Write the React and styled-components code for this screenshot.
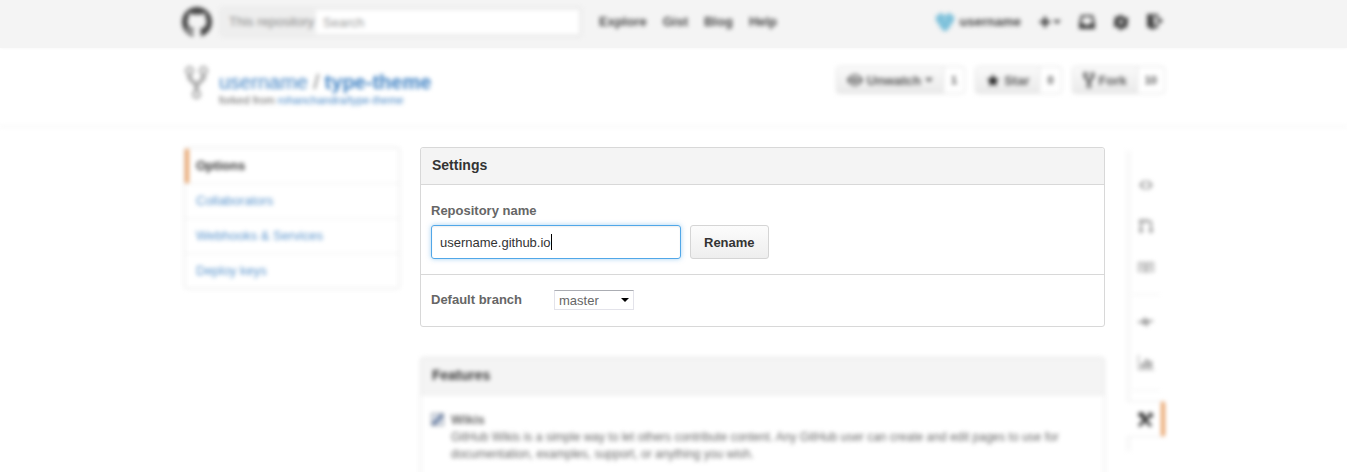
import React from "react";
import styled, { createGlobalStyle, css } from "styled-components";

const GlobalStyle = createGlobalStyle`
  * { box-sizing: border-box; }
  body {
    margin: 0;
    background: #fff;
    color: #333;
    font: 13px/18px "Liberation Sans", Arial, sans-serif;
  }
  a { color: #4183c4; text-decoration: none; }
  button, input, select { font-family: inherit; }
  h1, h2, p, ul, dl { margin: 0; padding: 0; }
`;

/* Everything that is not the active panel is out of focus. */
const soft = css`
  filter: blur(2px);
`;

const Page = styled.div`
  height: 100vh;
  overflow: hidden;
`;

const Container = styled.div`
  width: 100%;
  max-width: 983px;
  margin: 0 auto;
  display: flex;
`;

const TopBar = styled.header`
  background: #f4f4f4;
  box-shadow: 0 0 3px #f4f4f4;
`;

const TopBarRow = styled(Container)`
  ${soft}
  height: 48px;
  padding-bottom: 4px;
  align-items: center;
`;

const Icon = styled.svg`
  display: block;
  flex: none;
  fill: currentColor;
`;

const SearchForm = styled.form`
  display: flex;
  width: 362px;
  height: 30px;
  margin-left: 8px;
  padding: 2px;
  border: 1px solid #e6e6e6;
  border-radius: 3px;
  background: #eee;
`;

const SearchScope = styled.label`
  width: 93px;
  padding-left: 6px;
  color: #888;
  line-height: 24px;
  white-space: nowrap;
`;

const SearchInput = styled.input`
  flex: 1;
  min-width: 0;
  padding: 0 7px;
  border: 0;
  background: #fff;
  font-size: 13px;
  &::placeholder { color: #999; }
`;

const TopNav = styled.nav`
  display: flex;
  gap: 16px;
  margin-left: 17px;
`;

const TopLink = styled.a`
  color: #444;
  font-weight: bold;
`;

const UserTools = styled.div`
  display: flex;
  align-items: center;
  margin-left: auto;
  padding-right: 2px;
  gap: 18px;
  color: #333;
`;

const UserLink = styled(TopLink)`
  display: flex;
  align-items: center;
  gap: 6px;
`;

const ToolButton = styled.button`
  display: flex;
  align-items: center;
  gap: 2px;
  padding: 0;
  border: 0;
  background: none;
  color: #444;
`;

const Caret = styled.span`
  border: 4px solid transparent;
  border-top-color: currentColor;
  border-bottom: 0;
`;

const RepoHead = styled.div`
  ${soft}
  border-bottom: 1px solid #eee;
`;

const RepoHeadRow = styled(Container)`
  height: 78px;
  padding: 18px 0 0 3px;
  align-items: flex-start;
`;

const RepoTitle = styled.div`
  flex: 1;
  margin-left: 11px;
  padding-top: 4px;
`;

const RepoName = styled.h1`
  font-size: 20px;
  line-height: 24px;
  font-weight: normal;
  color: #777;
`;

const ForkedFrom = styled.p`
  font-size: 11px;
  line-height: 12px;
  color: #666;
`;

const RepoActions = styled.div`
  display: flex;
  gap: 10px;
`;

const ActionGroup = styled.div`
  display: flex;
  height: 28px;
  border: 1px solid #e2e2e2;
  border-radius: 3px;
`;

const ActionButton = styled.button`
  display: flex;
  align-items: center;
  gap: 4px;
  padding: 0 10px;
  border: 0;
  border-right: 1px solid #e2e2e2;
  background: linear-gradient(#fafafa, #eaeaea);
  color: #555;
  font-size: 13px;
  font-weight: bold;
`;

const ActionCount = styled.a`
  padding: 0 7px;
  color: #555;
  font-size: 11px;
  font-weight: bold;
  line-height: 26px;
`;

const Columns = styled(Container)`
  padding: 20px 0 0 2px;
  align-items: flex-start;
`;

const Menu = styled.nav`
  ${soft}
  width: 216px;
  border: 1px solid #e2e2e2;
  border-radius: 3px;
`;

const MenuItem = styled.a`
  display: block;
  height: 35px;
  padding-left: 11px;
  border-top: 1px solid ${(p) => (p.$active ? "transparent" : "#eee")};
  box-shadow: ${(p) => (p.$active ? "inset 4px 0 #e9a36a" : "none")};
  color: ${(p) => (p.$active ? "#333" : "#5a94cc")};
  font-weight: ${(p) => (p.$active ? "bold" : "normal")};
  line-height: 34px;
`;

const Main = styled.main`
  flex: 1;
  min-width: 0;
  margin: 0 22px 0 20px;
`;

const Panel = styled.section`
  margin-bottom: 30px;
  border: 1px solid ${(p) => (p.$soft ? "#e2e2e2" : "#d8d8d8")};
  border-radius: 3px;
  ${(p) => p.$soft && soft}
`;

const PanelTitle = styled.h2`
  padding: 0 11px 2px;
  border-bottom: 1px solid ${(p) => (p.$soft ? "#e6e6e6" : "#d8d8d8")};
  border-radius: 3px 3px 0 0;
  background: #f4f4f4;
  color: #333;
  font-size: 14px;
  line-height: 34px;
`;

const NameForm = styled.form`
  padding: 17px 10px 15px;
  border-bottom: 1px solid #d8d8d8;
`;

const FieldLabel = styled.label`
  display: block;
  color: #666;
  font-weight: bold;
`;

const FieldRow = styled.div`
  display: flex;
  gap: 9px;
  margin-top: 5px;
`;

const TextField = styled.div`
  display: flex;
  align-items: center;
  width: 250px;
  height: 34px;
  padding: 0 8px;
  border: 1px solid #51a7e8;
  border-radius: 3px;
  box-shadow: inset 0 1px 2px rgba(0, 0, 0, 0.07), 0 0 5px rgba(81, 167, 232, 0.5);
`;

const NameInput = styled.input`
  field-sizing: content;
  max-width: 100%;
  padding: 0;
  border: 0;
  outline: 0;
  background: none;
  color: #333;
  font-size: 13px;
`;

const TextCursor = styled.span`
  width: 1px;
  height: 16px;
  background: #000;
`;

const RenameButton = styled.button`
  height: 34px;
  padding: 0 13px;
  border: 1px solid #d5d5d5;
  border-radius: 3px;
  background: linear-gradient(#fcfcfc, #eee);
  color: #333;
  font-size: 13px;
  font-weight: bold;
`;

const BranchRow = styled.div`
  display: flex;
  align-items: center;
  gap: 32px;
  padding: 15px 10px 16px;
`;

const SelectWrap = styled.div`
  display: grid;
  align-items: center;
  width: 80px;
  height: 20px;
  border: 1px solid #e3e3ea;
  border-top-color: #abadb3;
  background: #fff;
  > * { grid-area: 1 / 1; }
`;

const Select = styled.select`
  appearance: none;
  width: 100%;
  padding: 0 4px;
  border: 0;
  background: none;
  color: #666;
  font-size: 13px;
`;

const SelectArrow = styled(Caret)`
  justify-self: end;
  margin-right: 4px;
  color: #000;
  pointer-events: none;
`;

const Feature = styled.div`
  display: flex;
  align-items: flex-start;
  gap: 7px;
  padding: 16px 11px 40px 10px;
  color: #666;
`;

const Checkbox = styled.input`
  flex: none;
  width: 13px;
  height: 13px;
  margin: 2px 0 0;
  appearance: none;
  border: 1px solid #9aa1ac;
  background: linear-gradient(135deg, #dde3ec 35%, #6f83a6 45%, #6f83a6 60%, #dde3ec 70%);
`;

const FeatureText = styled.p`
  font-size: 12px;
  line-height: 17px;
`;

const SideNav = styled.nav`
  ${soft}
  display: flex;
  flex-direction: column;
  width: 38px;
  height: 300px;
  margin-top: 4px;
  padding-top: 13px;
  box-shadow: inset 3px 0 #f4f4f4;
`;

const SideLink = styled.a`
  display: flex;
  align-items: center;
  justify-content: center;
  height: 41px;
  color: #999;
`;

const SideRule = styled.span`
  height: 1px;
  margin: 7px 6px 6px;
  background: #eee;
`;

const SideActive = styled(SideLink)`
  height: 36px;
  margin-top: 4px;
  padding-left: 2px;
  border: 1px solid #eee;
  border-left: 0;
  border-right: 4px solid #e9a36a;
  border-radius: 0 3px 3px 0;
  background: #fff;
  color: #333;
`;

function MarkIcon() {
  return (
    <Icon width="30" height="30" viewBox="0 0 16 16" aria-hidden="true">
      <path d="M8 0C3.58 0 0 3.58 0 8c0 3.54 2.29 6.53 5.47 7.59.4.07.55-.17.55-.38 0-.19-.01-.82-.01-1.49-2.01.37-2.53-.49-2.69-.94-.09-.23-.48-.94-.82-1.13-.28-.15-.68-.52-.01-.53.63-.01 1.08.58 1.23.82.72 1.21 1.87.87 2.33.66.07-.52.28-.87.51-1.07-1.78-.2-3.64-.89-3.64-3.95 0-.87.31-1.59.82-2.15-.08-.2-.36-1.02.08-2.12 0 0 .67-.21 2.2.82.64-.18 1.32-.27 2-.27.68 0 1.36.09 2 .27 1.53-1.04 2.2-.82 2.2-.82.44 1.1.16 1.92.08 2.12.51.56.82 1.27.82 2.15 0 3.07-1.87 3.75-3.65 3.95.29.25.54.73.54 1.48 0 1.07-.01 1.93-.01 2.2 0 .21.15.46.55.38A8.013 8.013 0 0 0 16 8c0-4.42-3.58-8-8-8z" />
    </Icon>
  );
}

const ForkSvg = styled(Icon)`
  color: ${(p) => p.$color};
`;

function ForkIcon({ width, height, color }) {
  return (
    <ForkSvg $color={color} width={width} height={height} viewBox="0 0 10 14" preserveAspectRatio="none" aria-hidden="true">
      <path
        fillRule="evenodd"
        d="M8 0a2 2 0 0 0-1 3.72V5L5 7 3 5V3.72A2 2 0 1 0 1 3.72V5.5l3 3v1.78a2 2 0 1 0 2 0V8.5l3-3V3.72A2 2 0 0 0 8 0zM2 3A1 1 0 1 1 2 1a1 1 0 0 1 0 2zm3 10a1 1 0 1 1 0-2 1 1 0 0 1 0 2zm3-10A1 1 0 1 1 8 1a1 1 0 0 1 0 2z"
      />
    </ForkSvg>
  );
}

const Avatar = styled(Icon)`
  color: #7cc0da;
`;

function Glyph({ children, size = 16 }) {
  return (
    <Icon width={size} height={size} viewBox="0 0 16 16" aria-hidden="true">
      {children}
    </Icon>
  );
}

export default function App() {
  return (
    <Page>
      <GlobalStyle />
      <TopBar>
        <TopBarRow>
          <TopLink href="#" aria-label="Home"><MarkIcon /></TopLink>
          <SearchForm>
            <SearchScope htmlFor="search">This repository</SearchScope>
            <SearchInput id="search" placeholder="Search" />
          </SearchForm>
          <TopNav>
            <TopLink href="#">Explore</TopLink>
            <TopLink href="#">Gist</TopLink>
            <TopLink href="#">Blog</TopLink>
            <TopLink href="#">Help</TopLink>
          </TopNav>
          <UserTools>
            <UserLink href="#">
              <Avatar width="18" height="18" viewBox="0 0 16 16" aria-hidden="true">
                <path d="M3 0h3v2h4V0h3v2h3v6h-2v3h-2v3h-2v2H6v-2H4v-3H2V8H0V2h3z" />
                <path d="M7 5h2v2H7z" fill="#b9dfec" />
              </Avatar>
              username
            </UserLink>
            <ToolButton aria-label="Create new">
              <Glyph size={12}><path d="M6 1h4v5h5v4h-5v5H6v-5H1V6h5z" /></Glyph>
              <Caret />
            </ToolButton>
            <ToolButton aria-label="Inbox">
              <Glyph>
                <path fillRule="evenodd" d="M2 1h12l2 8v6H0V9zM4 3 2 9h3l1 2h4l1-2h3l-2-6z" />
              </Glyph>
            </ToolButton>
            <ToolButton aria-label="Account settings">
              <Glyph>
                <path fillRule="evenodd" d="M6.500 1h3l.5 2 1.500.7 2-1 2 2-1 2 .5 1v2l-1 .8.5 2-2 2-2-.8-1 .6-.5 1.700h-3L5.500 13.300 4 13l-2 .5-1.500-2 1-2L1 8.500v-2l1-1-.5-2 2-1.500 2 1zM8 6a2 2 0 1 0 0 4 2 2 0 0 0 0-4z" />
              </Glyph>
            </ToolButton>
            <ToolButton aria-label="Sign out">
              <Glyph>
                <path d="M0 0h11v5H9V2H5l2 2v8h2V9h2v5H7v2L0 13zM10 6h2V3l4 4-4 3V8h-2z" />
              </Glyph>
            </ToolButton>
          </UserTools>
        </TopBarRow>
      </TopBar>

      <RepoHead>
        <RepoHeadRow>
          <ForkIcon width={23} height={33} color="#aaa" />
          <RepoTitle>
            <RepoName>
              <a href="#">username</a> / <a href="#"><strong>type-theme</strong></a>
            </RepoName>
            <ForkedFrom>forked from <a href="#">rohanchandra/type-theme</a></ForkedFrom>
          </RepoTitle>
          <RepoActions>
            <ActionGroup>
              <ActionButton>
                <Glyph>
                  <path fillRule="evenodd" d="M8 2C3.500 2 0 8 0 8s3.500 6 8 6 8-6 8-6-3.500-6-8-6zm0 10.500A4.500 4.500 0 1 1 8 3.500a4.500 4.500 0 0 1 0 9zM8 5.500 10.500 8A2.500 2.500 0 1 1 8 5.500z" />
                </Glyph>
                Unwatch
                <Caret />
              </ActionButton>
              <ActionCount href="#">1</ActionCount>
            </ActionGroup>
            <ActionGroup>
              <ActionButton>
                <Glyph size={14}>
                  <path d="m8 1 2 5 5 .5-3.500 3.500 1 5L8 12.500 3.500 15l1-5L1 6.500 6 6z" fill="#222" />
                </Glyph>
                Star
              </ActionButton>
              <ActionCount href="#">0</ActionCount>
            </ActionGroup>
            <ActionGroup>
              <ActionButton>
                <ForkIcon width={12} height={16} color="#444" />
                Fork
              </ActionButton>
              <ActionCount href="#">10</ActionCount>
            </ActionGroup>
          </RepoActions>
        </RepoHeadRow>
      </RepoHead>

      <Columns>
        <Menu>
          <MenuItem href="#" $active>Options</MenuItem>
          <MenuItem href="#">Collaborators</MenuItem>
          <MenuItem href="#">Webhooks &amp; Services</MenuItem>
          <MenuItem href="#">Deploy keys</MenuItem>
        </Menu>

        <Main>
          <Panel>
            <PanelTitle>Settings</PanelTitle>
            <NameForm>
              <FieldLabel htmlFor="repo-name">Repository name</FieldLabel>
              <FieldRow>
                <TextField>
                  <NameInput id="repo-name" defaultValue="username.github.io" spellCheck={false} />
                  <TextCursor />
                </TextField>
                <RenameButton type="button">Rename</RenameButton>
              </FieldRow>
            </NameForm>
            <BranchRow>
              <FieldLabel htmlFor="branch">Default branch</FieldLabel>
              <SelectWrap>
                <Select id="branch" defaultValue="master">
                  <option>master</option>
                </Select>
                <SelectArrow />
              </SelectWrap>
            </BranchRow>
          </Panel>

          <Panel $soft>
            <PanelTitle $soft>Features</PanelTitle>
            <Feature>
              <Checkbox type="checkbox" id="wikis" defaultChecked />
              <div>
                <FieldLabel htmlFor="wikis">Wikis</FieldLabel>
                <FeatureText>
                  GitHub Wikis is a simple way to let others contribute content. Any GitHub user can create and edit pages to use for documentation, examples, support, or anything you wish.
                </FeatureText>
              </div>
            </Feature>
          </Panel>
        </Main>

        <SideNav>
          <SideLink href="#" aria-label="Code">
            <Glyph><path d="M6 3 1 8l5 5 1.500-1.500L4 8l3.500-3.500zm4 0L8.500 4.500 12 8l-3.500 3.500L10 13l5-5z" /></Glyph>
          </SideLink>
          <SideLink href="#" aria-label="Pull requests">
            <Glyph>
              <path fillRule="evenodd" d="M2 5a2 2 0 1 1 2 0v6a2 2 0 1 1-2 0zm6-5v2h3c2 0 3 1 3 3v6a2 2 0 1 1-2 0V5c0-1-.5-1-1-1H8v2L5 3z" />
            </Glyph>
          </SideLink>
          <SideLink href="#" aria-label="Wiki">
            <Glyph>
              <path fillRule="evenodd" d="M0 3h7l1 1 1-1h7v10H9l-1 1-1-1H0zm1 1v8h6V4zm8 0v8h6V4zM2 5h4v1H2zm0 2h4v1H2zm0 2h4v1H2zm8-4h4v1h-4zm0 2h4v1h-4zm0 2h4v1h-4z" />
            </Glyph>
          </SideLink>
          <SideRule />
          <SideLink href="#" aria-label="Pulse">
            <Glyph><path d="M0 7h4l3-4 2 3h6v2h-4l-2 5-2-3-1 1-2-2H0z" /></Glyph>
          </SideLink>
          <SideLink href="#" aria-label="Graphs">
            <Glyph><path d="M0 0h1v14h15v1H0zm3 8h3v5H3zm4-4h3v9H7zm4 2h3v7h-3z" /></Glyph>
          </SideLink>
          <SideRule />
          <SideActive href="#" aria-label="Settings">
            <Glyph>
              <path d="m1 3 2-2 4 1 1 3 2 1 2-2-1-2 2-1 2 2 1-1v3l-2 2-2 0-2 2 5 5-2 2-5-5-5 5-2-2 5-5-2-3-2 0z" />
            </Glyph>
          </SideActive>
        </SideNav>
      </Columns>
    </Page>
  );
}
